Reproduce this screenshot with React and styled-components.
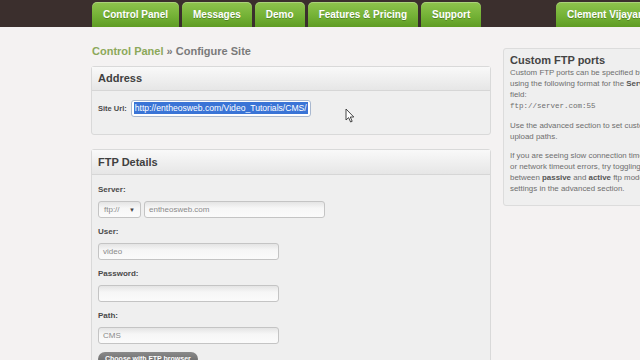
import React from "react";
import styled, { createGlobalStyle } from "styled-components";

const GlobalStyle = createGlobalStyle`
  html, body {
    margin: 0;
    padding: 0;
    overflow: hidden;
    background: #f4f2f2;
    font-family: "Liberation Sans", Arial, sans-serif;
  }
`;

// Top navigation
const TopBar = styled.div`
  height: 27px;
  background: #3b2f2d;
`;

const Wrap = styled.div`
  width: 564px;
  margin-left: 91px;
`;

const Nav = styled.div`
  display: flex;
  align-items: flex-end;
  gap: 3px;
  height: 27px;
  padding-left: 1px;
`;

const Tab = styled.div`
  height: 25px;
  line-height: 25px;
  padding: 0 11px;
  border-radius: 5px 5px 0 0;
  background: linear-gradient(#90c44e, #74b236 55%, #5f9c24);
  box-shadow: inset 0 1px 0 rgba(255, 255, 255, 0.25);
  color: #fff;
  font-size: 10px;
  font-weight: bold;
  white-space: nowrap;
  text-shadow: 0 1px 0 rgba(0, 0, 0, 0.25);
  margin-left: ${({ $right }) => ($right ? "auto" : "0")};
`;

// Page body
const Content = styled.div`
  display: flex;
  gap: 12px;
  padding-top: 17px;
`;

const Main = styled.div`
  width: 400px;
  flex-shrink: 0;
`;

const Crumb = styled.div`
  font-size: 11px;
  line-height: 14px;
  font-weight: bold;
  color: #7a7a7a;
  margin-bottom: 8px;
  padding-left: 1px;

  span {
    color: #8ca85a;
  }
`;

const Panel = styled.div`
  position: relative;
  border: 1px solid #d9d9d9;
  border-radius: 3px;
  background: #efefef;
  margin-bottom: 14px;
`;

const PanelHead = styled.div`
  height: ${({ $h }) => $h}px;
  line-height: ${({ $h }) => $h}px;
  padding-left: 6px;
  background: linear-gradient(#f9f9f9, #e6e6e6);
  border-bottom: 1px solid #d6d6d6;
  font-size: 11px;
  font-weight: bold;
  color: #404040;
`;

const PanelBody = styled.div`
  padding: ${({ $pad }) => $pad};
`;

const InlineRow = styled.div`
  display: flex;
  align-items: center;
  gap: 4px;
`;

const Label = styled.div`
  font-size: ${({ $small }) => ($small ? "7.5px" : "8px")};
  line-height: 10px;
  font-weight: bold;
  color: #4a4a4a;
  margin-bottom: ${({ $small }) => ($small ? "0" : "6px")};
`;

const Field = styled.div`
  box-sizing: border-box;
  width: ${({ $w }) => $w}px;
  height: 17px;
  line-height: 15px;
  padding: 0 4px;
  border: 1px solid #c4c4c4;
  border-radius: 3px;
  background: linear-gradient(#e4e4e4, #f6f6f6 40%, #fbfbfb);
  font-size: 8px;
  color: #8a8a8a;
  white-space: nowrap;
  overflow: hidden;
  margin-bottom: ${({ $mb }) => ($mb ? $mb : 0)}px;
`;

const UrlField = styled(Field)`
  background: #fff;
  border-color: #a9b8cf;
  padding: 0 2px;
  font-size: 8.6px;
`;

const Selected = styled.span`
  display: inline-block;
  line-height: 12px;
  background: #3a74d6;
  color: #fff;
  padding: 0 1px;
`;

const SelectBox = styled(Field)`
  display: flex;
  justify-content: space-between;
  align-items: center;
  padding: 0 5px;
  line-height: normal;

  i {
    font-style: normal;
    font-size: 6px;
    color: #444;
  }
`;

const FieldRow = styled.div`
  display: flex;
  gap: 3px;
  margin-bottom: 9px;
`;

const Button = styled.div`
  width: max-content;
  height: 14px;
  line-height: 14px;
  padding: 0 7px;
  border-radius: 7px;
  background: linear-gradient(#8a8a8a, #616161);
  color: #fff;
  font-size: 7px;
  font-weight: bold;
  margin-top: -1px;
`;

const Cursor = styled.svg`
  position: absolute;
  left: 253px;
  top: 41px;
`;

// Sidebar
const Side = styled.div`
  flex: 1;
  margin-top: 4px;
  align-self: flex-start;
  border: 1px solid #dcdcdc;
  border-radius: 3px;
  background: #efefef;
  padding: 4px 6px 11px;
`;

const SideTitle = styled.div`
  font-size: 11px;
  line-height: 14px;
  font-weight: bold;
  color: #444;
  white-space: nowrap;
`;

const SideText = styled.p`
  margin: 0 0 8px;
  font-size: 7.9px;
  line-height: 11px;
  color: #6e6e6e;
  white-space: nowrap;

  &:last-child {
    margin-bottom: 0;
  }

  b {
    color: #555;
  }
`;

const Mono = styled.span`
  font-family: "Liberation Mono", "Courier New", monospace;
  font-size: 7.5px;
  color: #6e6e6e;
`;

export default function App() {
  return (
    <>
      <GlobalStyle />
      <TopBar>
        <Wrap>
          <Nav>
            <Tab>Control Panel</Tab>
            <Tab>Messages</Tab>
            <Tab>Demo</Tab>
            <Tab>Features &amp; Pricing</Tab>
            <Tab>Support</Tab>
            <Tab $right>Clement Vijayan</Tab>
          </Nav>
        </Wrap>
      </TopBar>

      <Wrap>
        <Content>
          <Main>
            <Crumb>
              <span>Control Panel</span> » Configure Site
            </Crumb>

            <Panel>
              <PanelHead $h={23}>Address</PanelHead>
              <PanelBody $pad="9px 6px 17px">
                <InlineRow>
                  <Label $small>Site Url:</Label>
                  <UrlField $w={180}>
                    <Selected>http://entheosweb.com/Video_Tutorials/CMS/</Selected>
                  </UrlField>
                </InlineRow>
              </PanelBody>
              <Cursor width="10" height="15" viewBox="0 0 10 15">
                <path
                  d="M1 1 L1 12 L3.6 9.6 L5.6 14 L7.2 13.3 L5.3 9 L8.8 9 Z"
                  fill="#fff"
                  stroke="#333"
                  strokeWidth="0.9"
                  strokeLinejoin="round"
                />
              </Cursor>
            </Panel>

            <Panel>
              <PanelHead $h={24}>FTP Details</PanelHead>
              <PanelBody $pad="10px 6px 20px">
                <Label>Server:</Label>
                <FieldRow>
                  <SelectBox $w={43}>
                    ftp:// <i>▼</i>
                  </SelectBox>
                  <Field $w={181}>entheosweb.com</Field>
                </FieldRow>
                <Label>User:</Label>
                <Field $w={181} $mb={9}>video</Field>
                <Label>Password:</Label>
                <Field $w={181} $mb={9}></Field>
                <Label>Path:</Label>
                <Field $w={181} $mb={9}>CMS</Field>
                <Button>Choose with FTP browser</Button>
              </PanelBody>
            </Panel>
          </Main>

          <Side>
            <SideTitle>Custom FTP ports</SideTitle>
            <SideText>
              Custom FTP ports can be specified by
              <br />
              using the following format for the <b>Server</b>
              <br />
              field:
              <br />
              <Mono>ftp://server.com:55</Mono>
            </SideText>
            <SideText>
              Use the advanced section to set custom
              <br />
              upload paths.
            </SideText>
            <SideText>
              If you are seeing slow connection timeouts
              <br />
              or network timeout errors, try toggling
              <br />
              between <b>passive</b> and <b>active</b> ftp mode
              <br />
              settings in the advanced section.
            </SideText>
          </Side>
        </Content>
      </Wrap>
    </>
  );
}
